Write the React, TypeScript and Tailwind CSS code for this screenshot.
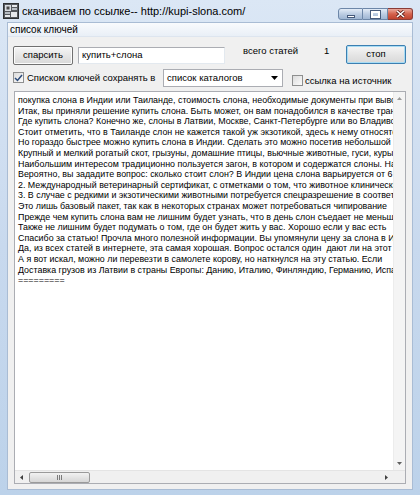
import React from "react";

const lines = [
  "покупка слона в Индии или Таиланде, стоимость слона, необходимые документы при вывозе слона",
  "Итак, вы приняли решение купить слона. Быть может, он вам понадобился в качестве транспорта",
  "Где купить слона? Конечно же, слоны в Латвии, Москве, Санкт-Петербурге или во Владивостоке",
  "Стоит отметить, что в Таиланде слон не кажется такой уж экзотикой, здесь к нему относятся",
  "Но гораздо быстрее можно купить слона в Индии. Сделать это можно посетив небольшой город",
  "Крупный и мелкий рогатый скот, грызуны, домашние птицы, вьючные животные, гуси, куры",
  "Наибольшим интересом традиционно пользуется загон, в котором и содержатся слоны. На",
  "Вероятно, вы зададите вопрос: сколько стоит слон? В Индии цена слона варьируется от 6",
  "2. Международный ветеринарный сертификат, с отметками о том, что животное клинически",
  "3. В случае с редкими и экзотическими животными потребуется спецразрешение в соответствии",
  "Это лишь базовый пакет, так как в некоторых странах может потребоваться чипирование",
  "Прежде чем купить слона вам не лишним будет узнать, что в день слон съедает не меньше",
  "Также не лишним будет подумать о том, где он будет жить у вас. Хорошо если у вас есть",
  "Спасибо за статью! Прочла много полезной информации. Вы упомянули цену за слона в Индии",
  "Да, из всех статей в интернете, эта самая хорошая. Вопрос остался один  дают ли на этот",
  "А я вот искал, можно ли перевезти в самолете корову, но наткнулся на эту статью. Если",
  "Доставка грузов из Латвии в страны Европы: Данию, Италию, Финляндию, Германию, Испанию",
  "=========",
];

function AppIcon() {
  return (
    <svg width="16" height="16" viewBox="0 0 16 16" className="ml-[3px] mr-[3px]">
      <rect x="0.5" y="0.5" width="15" height="15" fill="#55595e" stroke="#2e3134" />
      <rect x="2" y="2" width="6" height="6" fill="#d9dde2" />
      <rect x="3.5" y="3.5" width="3" height="3" fill="#4a4a4a" />
      <rect x="9" y="2" width="5" height="2" fill="#e6e9ec" />
      <rect x="9" y="5" width="5" height="2" fill="#b8bec5" />
      <rect x="2" y="9" width="5" height="2" fill="#b8bec5" />
      <rect x="8" y="9" width="6" height="5" fill="#e6e9ec" />
      <rect x="2" y="12" width="5" height="2" fill="#e6e9ec" />
    </svg>
  );
}

function CaptionButtons() {
  return (
    <div className="flex mt-[8px] mr-[7px] self-start">
      <div className="w-[25px] h-[12px] rounded-l-[3px] border border-[#6d87a8] bg-gradient-to-b from-[#e3ecf7] via-[#bccde3] to-[#9fb6d3] flex items-center justify-center">
        <div className="w-[8px] h-[3px] bg-white border border-[#45597a] mt-[4px]" />
      </div>
      <div className="w-[25px] h-[12px] border-y border-r border-[#6d87a8] bg-gradient-to-b from-[#e3ecf7] via-[#bccde3] to-[#9fb6d3] flex items-center justify-center">
        <div className="w-[9px] h-[7px] border-[2px] border-white outline outline-1 outline-[#45597a]" />
      </div>
      <div className="w-[25px] h-[12px] rounded-r-[3px] border-y border-r border-[#8a3c36] bg-gradient-to-b from-[#e9a99c] via-[#d4614c] to-[#c0442f] flex items-center justify-center">
        <svg width="9" height="8" viewBox="0 0 9 8">
          <path d="M1 1 L8 7 M8 1 L1 7" stroke="#5a1a14" strokeWidth="3" />
          <path d="M1 1 L8 7 M8 1 L1 7" stroke="#ffffff" strokeWidth="1.6" />
        </svg>
      </div>
    </div>
  );
}

function Button({ label, focused }: { label: string; focused?: boolean }) {
  return (
    <div
      className={
        "w-[60px] h-[19px] rounded-[2px] border flex items-center justify-center text-[9.5px] text-black bg-gradient-to-b from-[#f6f6f6] via-[#e6e6e6] to-[#d8d8d8] " +
        (focused ? "border-[#3c7fb1] shadow-[inset_0_0_0_1px_#a8dcf4]" : "border-[#707070] shadow-[inset_0_0_0_1px_#fcfcfc]")
      }
    >
      {label}
    </div>
  );
}

function Check({ checked }: { checked?: boolean }) {
  return (
    <div className="w-[11px] h-[11px] border border-[#8e8f8f] bg-gradient-to-br from-[#dcdcdc] to-[#fbfbfb] flex items-center justify-center">
      {checked && (
        <svg width="9" height="8" viewBox="0 0 9 8">
          <path d="M1 4 L3.5 6.5 L8 1" stroke="#2b4a7a" strokeWidth="1.5" fill="none" />
        </svg>
      )}
    </div>
  );
}

export default function App() {
  return (
    <div
      className="w-[420px] h-[495px] overflow-hidden flex flex-col bg-gradient-to-b from-[#dbe7f5] via-[#c8d9ee] to-[#bcd2ea] text-black"
      style={{ fontFamily: '"Liberation Sans", Arial, sans-serif' }}
    >
      {/* title bar */}
      <div className="h-[22px] flex items-center shrink-0">
        <AppIcon />
        <span className="text-[11px] leading-none mt-[1px]">скачиваем по ссылке-- http://kupi-slona.com/</span>
        <div className="flex-1" />
        <CaptionButtons />
      </div>
      {/* frame body */}
      <div className="flex-1 flex flex-col ml-[7px] mr-[7px] mb-[5px] border border-[#a9bcd4] min-h-0">
        {/* menu bar */}
        <div className="h-[14px] shrink-0 bg-gradient-to-b from-[#f9fbfd] to-[#e9eff7] flex items-center pl-[2px] text-[10px] border-b border-[#dde5ef]">
          список ключей
        </div>
        {/* client */}
        <div className="flex-1 bg-[#f0f0f0] flex flex-col pl-[5px] pr-[6px] pb-[5px] min-h-0">
          {/* row 1 */}
          <div className="flex items-start mt-[8px] h-[20px]">
            <div className="mt-[1px]">
              <Button label="спарсить" />
            </div>
            <div className="ml-[5px] mt-[2px] w-[147px] h-[17px] bg-white border border-[#abadb3] border-r-[#e3e9ef] border-b-[#e3e9ef] text-[9.5px] flex items-center pl-[3px]">
              купить+слона
            </div>
            <div className="ml-[18px] mt-[-1px] text-[9.5px]">всего статей</div>
            <div className="ml-[26px] mt-[-1px] text-[9.5px]">1</div>
            <div className="ml-auto">
              <Button label="стоп" focused />
            </div>
          </div>
          {/* row 2 */}
          <div className="flex items-start mt-[4px] h-[20px]">
            <div className="mt-[3px] shrink-0">
              <Check checked />
            </div>
            <div className="ml-[3px] mt-[2px] text-[9.5px] w-[136px] shrink-0 whitespace-nowrap">Списком ключей сохранять в</div>
            <div className="w-[120px] shrink-0 h-[18px] bg-white border border-[#abadb3] flex items-center pl-[3px] text-[9.5px]">
              <span className="flex-1">список каталогов</span>
              <svg width="7" height="4" viewBox="0 0 7 4" className="mr-[4px]">
                <path d="M0 0 L7 0 L3.5 4 Z" fill="#000" />
              </svg>
            </div>
            <div className="ml-[9px] mt-[6px] shrink-0">
              <Check />
            </div>
            <div className="ml-[2px] mt-[5px] text-[9.5px] whitespace-nowrap">ссылка на источник</div>
          </div>
          {/* text area */}
          <div className="mt-[2px] flex-1 flex flex-col border border-[#abadb3] bg-white min-h-0 ml-[1px]">
            <div className="flex-1 flex min-h-0">
              <div className="flex-1 overflow-hidden pl-[3px] pt-[3px] text-[8.9px] leading-[10.6px] min-w-0">
                {lines.map((l, i) => (
                  <div key={i} className="whitespace-pre">
                    {l}
                  </div>
                ))}
              </div>
              <div className="w-[12px] bg-[#f4f4f4] flex flex-col items-center justify-between py-[5px] border-l border-[#ececec]">
                <svg width="5" height="3" viewBox="0 0 5 3">
                  <path d="M0 3 L5 3 L2.5 0 Z" fill="#9a9a9a" />
                </svg>
                <svg width="5" height="3" viewBox="0 0 5 3">
                  <path d="M0 0 L5 0 L2.5 3 Z" fill="#606060" />
                </svg>
              </div>
            </div>
            <div className="h-[13px] flex shrink-0">
              <div className="flex-1 bg-[#f0f0f0] flex items-center border-t border-[#e4e4e4]">
                <svg width="3" height="5" viewBox="0 0 3 5" className="ml-[5px]">
                  <path d="M3 0 L3 5 L0 2.5 Z" fill="#404040" />
                </svg>
                <div className="ml-[6px] w-[61px] h-[11px] rounded-[2px] border border-[#9a9a9a] bg-gradient-to-b from-[#f2f2f2] to-[#d6d6d6] flex items-center justify-center gap-[1px]">
                  <div className="w-[1px] h-[5px] bg-[#7a7a7a]" />
                  <div className="w-[1px] h-[5px] bg-[#7a7a7a]" />
                  <div className="w-[1px] h-[5px] bg-[#7a7a7a]" />
                </div>
                <div className="flex-1" />
                <svg width="3" height="5" viewBox="0 0 3 5" className="mr-[5px]">
                  <path d="M0 0 L0 5 L3 2.5 Z" fill="#404040" />
                </svg>
              </div>
              <div className="w-[12px] bg-[#f0f0f0] border-t border-[#e4e4e4]" />
            </div>
          </div>
        </div>
      </div>
    </div>
  );
}
